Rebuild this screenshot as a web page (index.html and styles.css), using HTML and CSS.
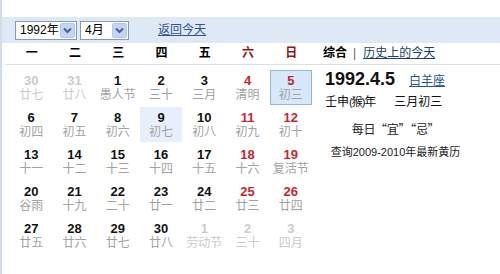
FILE: index.html
```html
<!DOCTYPE html>
<html lang="zh-CN">
<head>
<meta charset="utf-8">
<title>万年历</title>
<link rel="stylesheet" href="styles.css">
</head>
<body>
<div class="frame">
  <div class="toolbar">
    <div class="sel sel-year">
      <span class="sel-text">1992年</span>
      <span class="sel-btn"><svg width="15" height="15" viewBox="0 0 15 15"><rect x="0.5" y="0.5" width="14" height="14" rx="1.5" fill="#c3d4f8" stroke="#b3c6ee"/><path d="M4 5.5 L7.5 9 L11 5.5" stroke="#4d6185" stroke-width="2" fill="none"/></svg></span>
    </div>
    <div class="sel sel-month">
      <span class="sel-text">4月</span>
      <span class="sel-btn"><svg width="15" height="15" viewBox="0 0 15 15"><rect x="0.5" y="0.5" width="14" height="14" rx="1.5" fill="#c3d4f8" stroke="#b3c6ee"/><path d="M4 5.5 L7.5 9 L11 5.5" stroke="#4d6185" stroke-width="2" fill="none"/></svg></span>
    </div>
    <a class="today-link" href="#">返回今天</a>
  </div>

  <div class="head">
    <div class="weekdays">
      <span>一</span><span>二</span><span>三</span><span>四</span><span>五</span><span class="wk-end">六</span><span class="wk-end">日</span>
    </div>
    <div class="tabs">
      <b class="tab-on">综合</b><span class="tab-sep">|</span><a class="tab-link" href="#">历史上的今天</a>
    </div>
  </div>

  <div class="main">
    <div class="days">
      <div class="cell off"><b>30</b><span>廿七</span></div>
      <div class="cell off"><b>31</b><span>廿八</span></div>
      <div class="cell"><b>1</b><span>愚人节</span></div>
      <div class="cell"><b>2</b><span>三十</span></div>
      <div class="cell"><b>3</b><span>三月</span></div>
      <div class="cell red"><b>4</b><span>清明</span></div>
      <div class="cell red selected"><b>5</b><span>初三</span></div>

      <div class="cell"><b>6</b><span>初四</span></div>
      <div class="cell"><b>7</b><span>初五</span></div>
      <div class="cell"><b>8</b><span>初六</span></div>
      <div class="cell today"><b>9</b><span>初七</span></div>
      <div class="cell"><b>10</b><span>初八</span></div>
      <div class="cell red"><b>11</b><span>初九</span></div>
      <div class="cell red"><b>12</b><span>初十</span></div>

      <div class="cell"><b>13</b><span>十一</span></div>
      <div class="cell"><b>14</b><span>十二</span></div>
      <div class="cell"><b>15</b><span>十三</span></div>
      <div class="cell"><b>16</b><span>十四</span></div>
      <div class="cell"><b>17</b><span>十五</span></div>
      <div class="cell red"><b>18</b><span>十六</span></div>
      <div class="cell red"><b>19</b><span>复活节</span></div>

      <div class="cell"><b>20</b><span>谷雨</span></div>
      <div class="cell"><b>21</b><span>十九</span></div>
      <div class="cell"><b>22</b><span>二十</span></div>
      <div class="cell"><b>23</b><span>廿一</span></div>
      <div class="cell"><b>24</b><span>廿二</span></div>
      <div class="cell red"><b>25</b><span>廿三</span></div>
      <div class="cell red"><b>26</b><span>廿四</span></div>

      <div class="cell"><b>27</b><span>廿五</span></div>
      <div class="cell"><b>28</b><span>廿六</span></div>
      <div class="cell"><b>29</b><span>廿七</span></div>
      <div class="cell"><b>30</b><span>廿八</span></div>
      <div class="cell off"><b>1</b><span>劳动节</span></div>
      <div class="cell off"><b>2</b><span>三十</span></div>
      <div class="cell off"><b>3</b><span>四月</span></div>
    </div>

    <div class="side">
      <div class="date-line"><span class="big-date">1992.4.5</span><a class="star-link" href="#">白羊座</a></div>
      <div class="lunar-line">壬申<span class="zodiac">(猴)</span>年<span class="lunar-md">三月初三</span></div>
      <div class="center-line yiji">每日“宜”“忌”</div>
      <div class="center-line almanac">查询2009-2010年最新黄历</div>
    </div>
  </div>
</div>
</body>
</html>
```

FILE: styles.css
```css
html, body {
  margin: 0;
  padding: 0;
  background: #ffffff;
}

body {
  font-family: "Liberation Sans", "Noto Sans CJK SC", sans-serif;
  font-size: 12px;
  color: #000;
}

.frame {
  height: 274px;
  border-left: 2px solid #d3dbe6;
  box-sizing: border-box;
  overflow: hidden;
}

/* toolbar band */
.toolbar {
  margin-top: 17px;
  height: 26px;
  background: #dfe8f5;
  display: flex;
  align-items: center;
  padding-left: 13px;
}

.sel {
  height: 19px;
  box-sizing: border-box;
  border: 1px solid #7f9db9;
  background: #fff;
  display: flex;
  align-items: center;
  justify-content: space-between;
  padding: 0 1px 0 4px;
  font-size: 12px;
  color: #000;
}

.sel-year { width: 62px; }
.sel-month { width: 49px; margin-left: 3px; }

.sel-text { line-height: 17px; }

.sel-btn {
  display: flex;
  width: 15px;
  height: 15px;
}

.today-link {
  margin-left: 29px;
  color: #2d5597;
  text-decoration: underline;
  font-size: 12px;
  line-height: 16px;
}

/* weekday header row */
.head {
  display: flex;
  height: 21px;
  margin-left: 3px;
  border-bottom: 1px solid #dce1e8;
}

.weekdays {
  margin-left: 5px;
  width: 303px;
  display: grid;
  grid-template-columns: repeat(7, 1fr);
  line-height: 21px;
  text-align: center;
  font-weight: bold;
  font-size: 12px;
}

.wk-end { color: #8b1414; }

.tabs {
  padding-left: 10px;
  line-height: 21px;
  display: flex;
  align-items: center;
}

.tab-on { font-weight: bold; }

.tab-sep {
  color: #666;
  margin: 0 7px 0 6px;
}

.tab-link {
  color: #1d3c72;
  text-decoration: underline;
}

/* main */
.main {
  display: flex;
}

.days {
  margin-left: 8px;
  padding-top: 3.5px;
  width: 303px;
  display: grid;
  grid-template-columns: repeat(7, 1fr);
  grid-auto-rows: 37px;
}

.cell {
  margin: 1px 1px 1px 0;
  padding-top: 4px;
  box-sizing: border-box;
  text-align: center;
  display: flex;
  flex-direction: column;
  align-items: center;
}

.cell b {
  font-size: 13px;
  line-height: 14px;
  font-weight: bold;
  color: #111;
}

.cell span {
  font-size: 12px;
  line-height: 14px;
  color: #a2a2a2;
}

.cell.red b { color: #c5262f; }

.cell.off b,
.cell.off span { color: #cbcbcb; }

.cell.today { background: #e7f0fa; }

.cell.selected {
  background: #d7e8fb;
  border: 1px solid #92b5da;
  padding-top: 3px;
}

/* side panel */
.side {
  width: 165px;
  padding-left: 12px;
  box-sizing: border-box;
}

.date-line {
  margin-top: 3px;
  line-height: 22px;
  white-space: nowrap;
}

.big-date {
  font-size: 18px;
  font-weight: bold;
  color: #111;
}

.star-link {
  margin-left: 14px;
  color: #2450a0;
  text-decoration: underline;
  font-size: 12px;
}

.lunar-line {
  margin-top: 2px;
  line-height: 16px;
  color: #111;
  white-space: nowrap;
}

.zodiac {
  font-size: 11px;
  letter-spacing: -1px;
}

.lunar-md { margin-left: 18px; }

.center-line {
  margin-left: -12px;
  text-align: center;
  line-height: 16px;
  color: #222;
  white-space: nowrap;
}

.yiji {
  margin-top: 11px;
  font-family: "Noto Sans CJK SC", sans-serif;
  letter-spacing: -0.3px;
}

.almanac { margin-top: 7px; font-size: 11px; }
```
